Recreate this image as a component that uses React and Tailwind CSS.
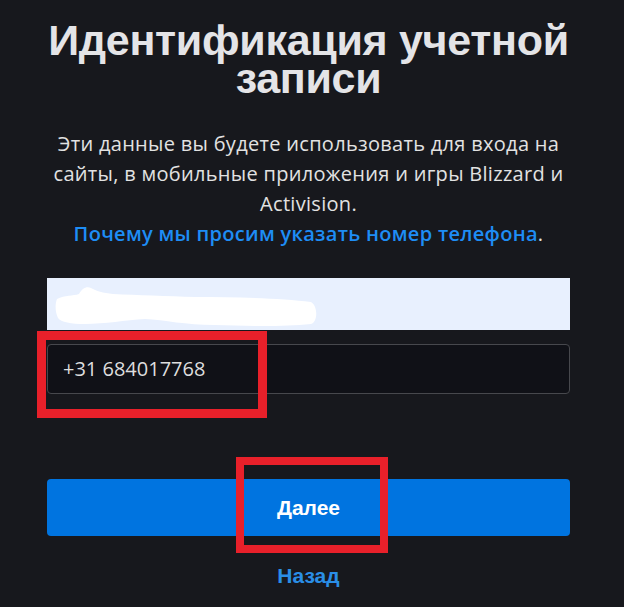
export default function App() {
  return (
    <div className="relative min-h-[607px] w-full overflow-hidden bg-[#17181d] text-[#e6e6e6]">
      <div className="flex flex-col items-center pl-[47px] pr-[54px] pt-[21px]">
        <h1 className="-mx-[20px] text-center font-['Liberation_Sans',Arial,sans-serif] text-[43px] font-bold leading-[38px] tracking-[-0.3px] whitespace-nowrap text-[#e4e4e7]">
          Идентификация учетной
          <br />
          записи
        </h1>

        <p className="mt-[32px] text-center font-['Open_Sans',sans-serif] text-[20px] leading-[30px] tracking-[0.3px] whitespace-nowrap text-[#e2e2e2]">
          Эти данные вы будете использовать для входа на
          <br />
          сайты, в мобильные приложения и игры Blizzard и
          <br />
          Activision.
          <br />
          <a className="font-semibold text-[#1e8df5]">Почему мы просим указать номер телефона</a>.
        </p>

        <div className="mt-[29px] w-full">
          <div className="relative h-[52px] w-full bg-[#e8f0fe]">
            <svg className="absolute left-[8px] top-[7px]" width="264" height="44" viewBox="0 0 264 44">
              <path
                d="M2 14 C10 10 18 11 24 9 C27 4 31 1 36 3 C41 6 48 8 58 9 C82 10 112 11 140 12 C180 12 226 13 256 17 C263 21 263 37 256 39 C226 42 190 41 160 40 C130 40 110 35 90 34 C70 35 50 39 30 39 C16 39 6 37 3 33 C0 27 0 19 2 14 Z"
                fill="#ffffff"
              />
            </svg>
          </div>

          <div className="mt-[14px] flex h-[50px] w-full items-center rounded-[4px] border border-[#47484d] bg-[#101117] px-[15px] font-['Open_Sans',sans-serif] text-[20px] text-[#dedede]">
            +31 684017768
          </div>
        </div>

        <button className="mt-[85px] flex h-[57px] w-full items-center justify-center rounded-[4px] bg-[#0074e0] font-['Liberation_Sans',Arial,sans-serif] text-[21px] font-bold text-white">
          Далее
        </button>

        <a className="mt-[24px] font-['Liberation_Sans',Arial,sans-serif] text-[21px] font-bold text-[#2a8ee6]">Назад</a>
      </div>

      {/* red annotation boxes */}
      <div className="pointer-events-none absolute left-[37px] top-[331px] h-[87px] w-[230px] border-[9px] border-[#e8202a]" />
      <div className="pointer-events-none absolute left-[236px] top-[457px] h-[96px] w-[152px] border-[8px] border-[#e8202a]" />
    </div>
  );
}
